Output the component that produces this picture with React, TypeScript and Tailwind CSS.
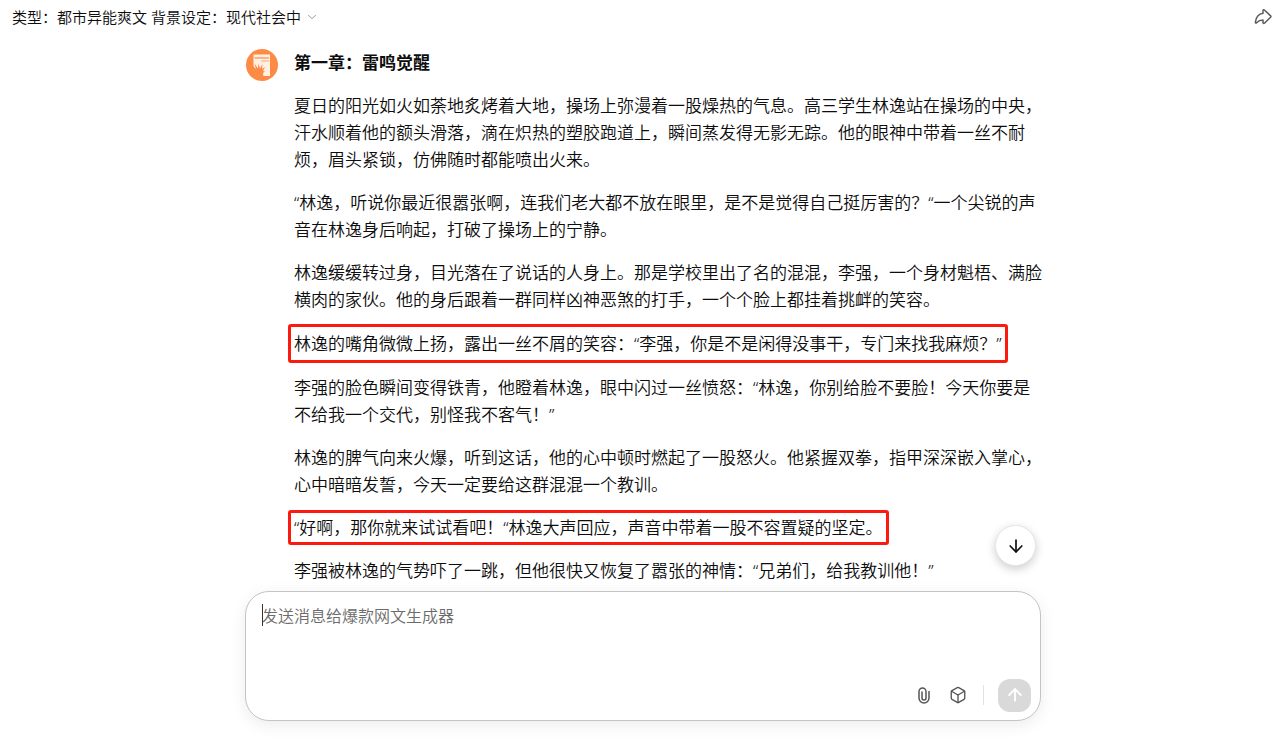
import { ArrowDown, ArrowUp, Box, ChevronDown } from 'lucide-react';
import clsx from 'clsx';

type Block = {
  text: string;
  mark?: 'tall' | 'short';
};

const blocks: Block[] = [
  { text: '夏日的阳光如火如荼地炙烤着大地，操场上弥漫着一股燥热的气息。高三学生林逸站在操场的中央，汗水顺着他的额头滑落，滴在炽热的塑胶跑道上，瞬间蒸发得无影无踪。他的眼神中带着一丝不耐烦，眉头紧锁，仿佛随时都能喷出火来。' },
  { text: '“林逸，听说你最近很嚣张啊，连我们老大都不放在眼里，是不是觉得自己挺厉害的？“一个尖锐的声音在林逸身后响起，打破了操场上的宁静。' },
  { text: '林逸缓缓转过身，目光落在了说话的人身上。那是学校里出了名的混混，李强，一个身材魁梧、满脸横肉的家伙。他的身后跟着一群同样凶神恶煞的打手，一个个脸上都挂着挑衅的笑容。' },
  { text: '林逸的嘴角微微上扬，露出一丝不屑的笑容：“李强，你是不是闲得没事干，专门来找我麻烦？”', mark: 'tall' },
  { text: '李强的脸色瞬间变得铁青，他瞪着林逸，眼中闪过一丝愤怒：“林逸，你别给脸不要脸！今天你要是不给我一个交代，别怪我不客气！”' },
  { text: '林逸的脾气向来火爆，听到这话，他的心中顿时燃起了一股怒火。他紧握双拳，指甲深深嵌入掌心，心中暗暗发誓，今天一定要给这群混混一个教训。' },
  { text: '“好啊，那你就来试试看吧！“林逸大声回应，声音中带着一股不容置疑的坚定。', mark: 'short' },
  { text: '李强被林逸的气势吓了一跳，但他很快又恢复了嚣张的神情：“兄弟们，给我教训他！”' },
];

function ShareIcon() {
  return (
    <svg width="18" height="18" viewBox="0 0 18 18" fill="none" stroke="#5c5c5c" strokeWidth="1.5" strokeLinejoin="round">
      <path d="M9 2.6c0-.8.8-1.1 1.4-.6l6.2 5.9c.4.4.4 1 0 1.4l-6.2 5.9c-.6.5-1.4.2-1.4-.6v-2.500c-2.800 0-4.600.8-6.400 2.700-.6.6-1.300.2-1.200-.6C2 9 4.600 5.800 9 5.200z" />
    </svg>
  );
}

function ClipIcon() {
  return (
    <svg width="12" height="17" viewBox="0 0 12 17" fill="none" stroke="currentColor" strokeWidth="1.5" strokeLinecap="round">
      <path d="M11 4.5V11a5 5 0 0 1-10 0V4.500a3.500 3.500 0 0 1 7 0V11a2 2 0 0 1-4 0V5" />
    </svg>
  );
}

function BotAvatar() {
  return (
    <svg className="size-8 shrink-0" viewBox="0 0 32 32" aria-hidden="true">
      <circle cx="16" cy="16" r="16" fill="#fd8a45" />
      <path d="M7.500 5.500H24V27H8V23L7.500 19z" fill="#fff0e2" />
      <path d="M8.500 9H23" stroke="#fd9a5e" strokeWidth="1.4" />
      <path d="M15 12h8" stroke="#fdb084" strokeWidth="1.2" />
      <path d="M6 16l4 4-1.500-5.500 3.500 5 .5-5 1.500 5 2.500-4.500-.5 5 3-2-2 4 2 .5-2 1.500.5 4H7l-2-5z" fill="#fd8a45" />
    </svg>
  );
}

function Paragraph({ text, mark }: Block) {
  return (
    <p
      className={clsx(
        mark && '-ml-1.5 w-fit rounded-[3px] border-3 border-[#fc1a0f] px-[3px]',
        mark === 'tall' && '-my-[5px] py-[3px]',
        mark === 'short' && '-my-1 py-px',
      )}
    >
      {text}
    </p>
  );
}

function Composer() {
  return (
    <form
      className="relative rounded-3xl border border-[#c4c4c4] bg-white shadow-[0_4px_16px_rgba(0,0,0,0.08)]"
      onSubmit={(e) => e.preventDefault()}
    >
      <textarea
        aria-label="发送消息"
        placeholder="发送消息给爆款网文生成器"
        className="block h-[86px] w-full resize-none bg-transparent px-4 pt-3 text-[16px] leading-6 text-black caret-transparent outline-none placeholder:text-[#6b6b6b]"
      />
      {/* text cursor */}
      <span className="pointer-events-none absolute top-3 left-4 h-[22px] w-px bg-[#333]" />
      <div className="flex items-center justify-end pr-[9px] pb-2">
        <button type="button" aria-label="附件" className="flex size-[34px] items-center justify-center text-[#555]">
          <ClipIcon />
        </button>
        <button type="button" aria-label="工具" className="flex size-[34px] items-center justify-center text-[#555]">
          <Box size={18} strokeWidth={1.8} />
        </button>
        <span className="mr-[14px] ml-2 h-5 w-px bg-[#e2e2e2]" />
        <button type="submit" aria-label="发送" className="flex size-[33px] items-center justify-center rounded-xl bg-[#d9d9d9] text-white">
          <ArrowUp size={20} strokeWidth={2.2} />
        </button>
      </div>
    </form>
  );
}

export default function App() {
  return (
    <div className="flex h-screen flex-col bg-white font-['Noto_Sans','Noto_Sans_CJK_SC',sans-serif] font-[350] text-[#0d0d0d]">
      <header className="flex h-[33px] shrink-0 items-center justify-between pr-2 pl-3">
        <button type="button" className="flex items-center gap-1 text-[15px] leading-6">
          类型：都市异能爽文 背景设定：现代社会中
          <ChevronDown size={14} strokeWidth={1.5} className="text-[#888]" />
        </button>
        <button type="button" aria-label="分享">
          <ShareIcon />
        </button>
      </header>

      <div className="relative mx-auto flex min-h-0 w-full max-w-[802px] flex-1 flex-col pb-5 pl-1.5">
        <main className="-mr-1 flex min-h-0 flex-1 gap-4 overflow-hidden pt-4 pl-px">
          <BotAvatar />
          <article lang="zh-CN" className="flex min-w-0 flex-1 flex-col gap-4 text-[17px] leading-[27px]">
            <h1 className="font-bold">第一章：雷鸣觉醒</h1>
            {blocks.map((block) => (
              <Paragraph key={block.text} {...block} />
            ))}
          </article>
        </main>

        <button
          type="button"
          aria-label="滚动到底部"
          className="absolute right-[5px] bottom-[175px] flex size-[41px] items-center justify-center rounded-full border border-[#e6e6e6] bg-white shadow-[0_3px_10px_rgba(0,0,0,0.2)]"
        >
          <ArrowDown size={20} strokeWidth={2} />
        </button>

        <Composer />
      </div>
    </div>
  );
}
